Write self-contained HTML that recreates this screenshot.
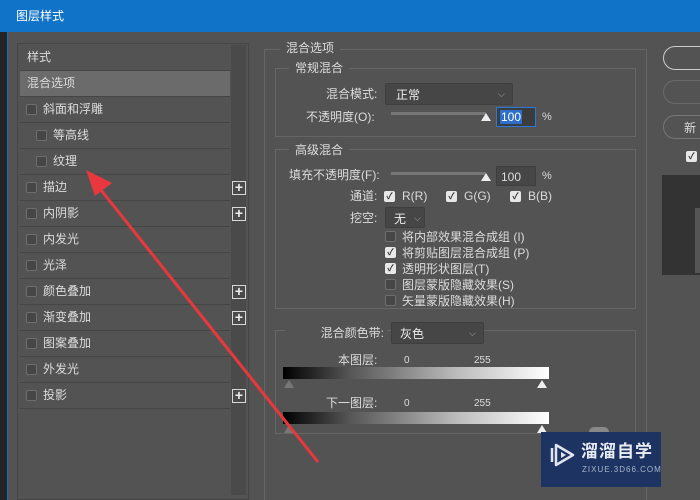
<!DOCTYPE html>
<html style="overflow:hidden"><head><meta charset="utf-8"><style>
*{margin:0;padding:0;box-sizing:border-box}
html,body{width:700px;height:500px;overflow:hidden}
body{background:#535353;font-family:"Liberation Sans","Noto Sans CJK SC",sans-serif;color:#dcdcdc;font-size:12px;position:relative;line-height:14px}
.a{position:absolute}
.row{position:absolute;left:20px;width:210px;height:26px;border-bottom:1px solid #454545;line-height:25px}
.cb{position:absolute;width:11px;height:11px;border:1px solid #6e6e6e;background:#464646;border-radius:2px}
.ck{position:absolute;width:11px;height:11px;background:#e8e8e8;border-radius:2px;color:#333;font-size:9px;line-height:11px;text-align:center;font-weight:bold}
.plus{position:absolute;left:212px;top:6px;width:14px;height:14px;border:1px solid #d8d8d8;color:#eee;font-size:14px;line-height:11px;text-align:center;font-weight:bold}
.grp{position:absolute;border:1px solid #666}
.lbl{position:absolute;background:#535353;padding:0 6px}
.sel{position:absolute;background:#464646;border:1px solid #3e3e3e;border-radius:2px;color:#eee}
.sl{position:absolute;height:3px;background:#777}
.th{position:absolute;width:0;height:0;border-left:5px solid transparent;border-right:5px solid transparent;border-bottom:8px solid #eee}
</style></head><body>
<div class="a" style="left:0;top:0;width:700px;height:32px;background:#1173c7"></div>
<div class="a" style="left:16px;top:9px;color:#fff;font-size:12px">图层样式</div>
<div class="a" style="left:0;top:32px;width:7px;height:468px;background:#242424"></div>
<div class="a" style="left:7px;top:32px;width:1px;height:468px;background:#1a6ec0"></div>
<div class="a" style="left:17px;top:43px;width:232px;height:457px;border:1px solid #464646"></div>
<div class="a" style="left:231px;top:45px;width:15px;height:450px;background:#4a4a4a"></div>

<div class="row" style="top:45px;padding-left:7px">样式</div>
<div class="row" style="top:71px;padding-left:7px;background:#6b6b6b">混合选项</div>
<div class="row" style="top:97px"><div class="cb" style="left:6px;top:7px"></div><span class="a" style="left:23px">斜面和浮雕</span></div>
<div class="row" style="top:123px"><div class="cb" style="left:16px;top:7px"></div><span class="a" style="left:33px">等高线</span></div>
<div class="row" style="top:149px"><div class="cb" style="left:16px;top:7px"></div><span class="a" style="left:33px">纹理</span></div>
<div class="row" style="top:175px"><div class="cb" style="left:6px;top:7px"></div><span class="a" style="left:23px">描边</span><div class="plus">+</div></div>
<div class="row" style="top:201px"><div class="cb" style="left:6px;top:7px"></div><span class="a" style="left:23px">内阴影</span><div class="plus">+</div></div>
<div class="row" style="top:227px"><div class="cb" style="left:6px;top:7px"></div><span class="a" style="left:23px">内发光</span></div>
<div class="row" style="top:253px"><div class="cb" style="left:6px;top:7px"></div><span class="a" style="left:23px">光泽</span></div>
<div class="row" style="top:279px"><div class="cb" style="left:6px;top:7px"></div><span class="a" style="left:23px">颜色叠加</span><div class="plus">+</div></div>
<div class="row" style="top:305px"><div class="cb" style="left:6px;top:7px"></div><span class="a" style="left:23px">渐变叠加</span><div class="plus">+</div></div>
<div class="row" style="top:331px"><div class="cb" style="left:6px;top:7px"></div><span class="a" style="left:23px">图案叠加</span></div>
<div class="row" style="top:357px"><div class="cb" style="left:6px;top:7px"></div><span class="a" style="left:23px">外发光</span></div>
<div class="row" style="top:383px"><div class="cb" style="left:6px;top:7px"></div><span class="a" style="left:23px">投影</span><div class="plus">+</div></div>

<div class="grp" style="left:264px;top:49px;width:383px;height:460px;border-bottom:none"></div>
<div class="lbl" style="left:280px;top:41px">混合选项</div>
<div class="grp" style="left:275px;top:68px;width:361px;height:69px"></div>
<div class="lbl" style="left:289px;top:61px">常规混合</div>
<div class="a" style="left:326px;top:87px">混合模式:</div>
<div class="sel" style="left:385px;top:83px;width:128px;height:22px;padding:4px 0 0 10px">正常<span class="a" style="left:112px;top:3px;font-size:9px;color:#aaa">⌵</span></div>
<div class="a" style="left:306px;top:110px">不透明度(O):</div>
<div class="sl" style="left:391px;top:112px;width:95px"></div>
<div class="th" style="left:481px;top:113px"></div>
<div class="a" style="left:496px;top:107px;width:40px;height:20px;border:1px solid #2b79d6;background:#3c3c3c"><span style="background:#2e6fcc;color:#fff;padding:0 1px;position:absolute;left:3px;top:2px;line-height:14px">100</span></div>
<div class="a" style="left:542px;top:110px;font-size:11px">%</div>

<div class="grp" style="left:275px;top:149px;width:361px;height:160px"></div>
<div class="lbl" style="left:289px;top:143px">高级混合</div>
<div class="a" style="left:289px;top:168px">填充不透明度(F):</div>
<div class="sl" style="left:391px;top:172px;width:95px"></div>
<div class="th" style="left:481px;top:173px"></div>
<div class="a" style="left:496px;top:166px;width:40px;height:20px;border:1px solid #3e3e3e;background:#464646;padding:3px 0 0 4px">100</div>
<div class="a" style="left:542px;top:169px;font-size:11px">%</div>
<div class="a" style="left:350px;top:189px">通道:</div>
<div class="ck" style="left:384px;top:191px">✓</div><div class="a" style="left:402px;top:189px">R(R)</div>
<div class="ck" style="left:446px;top:191px">✓</div><div class="a" style="left:464px;top:189px">G(G)</div>
<div class="ck" style="left:510px;top:191px">✓</div><div class="a" style="left:528px;top:189px">B(B)</div>
<div class="a" style="left:350px;top:211px">挖空:</div>
<div class="sel" style="left:385px;top:207px;width:40px;height:21px;padding:4px 0 0 8px">无<span class="a" style="left:28px;top:3px;font-size:9px;color:#aaa">⌵</span></div>
<div class="cb" style="left:385px;top:231px"></div><div class="a" style="left:402px;top:230px">将内部效果混合成组 (I)</div>
<div class="ck" style="left:385px;top:247px">✓</div><div class="a" style="left:402px;top:246px">将剪贴图层混合成组 (P)</div>
<div class="ck" style="left:385px;top:263px">✓</div><div class="a" style="left:402px;top:262px">透明形状图层(T)</div>
<div class="cb" style="left:385px;top:279px"></div><div class="a" style="left:402px;top:278px">图层蒙版隐藏效果(S)</div>
<div class="cb" style="left:385px;top:295px"></div><div class="a" style="left:402px;top:294px">矢量蒙版隐藏效果(H)</div>

<div class="grp" style="left:275px;top:330px;width:361px;height:104px"></div>
<div class="lbl" style="left:285px;top:326px;padding:0 3px 0 0;width:102px;text-align:right">混合颜色带:</div>
<div class="sel" style="left:391px;top:322px;width:93px;height:22px;padding:4px 0 0 8px">灰色<span class="a" style="left:77px;top:3px;font-size:9px;color:#aaa">⌵</span></div>
<div class="a" style="left:338px;top:353px">本图层:</div>
<div class="a" style="left:404px;top:354px;font-size:10px">0</div>
<div class="a" style="left:474px;top:354px;font-size:10px">255</div>
<div class="a" style="left:283px;top:367px;width:266px;height:12px;background:linear-gradient(90deg,#000,#555 25%,#bbb 65%,#fff)"></div>
<div class="th" style="left:284px;top:380px;border-bottom-color:#777"></div>
<div class="th" style="left:537px;top:380px"></div>
<div class="a" style="left:326px;top:396px">下一图层:</div>
<div class="a" style="left:404px;top:397px;font-size:10px">0</div>
<div class="a" style="left:474px;top:397px;font-size:10px">255</div>
<div class="a" style="left:283px;top:412px;width:266px;height:12px;background:linear-gradient(90deg,#000,#555 25%,#bbb 65%,#fff)"></div>
<div class="th" style="left:284px;top:425px;border-bottom-color:#777"></div>
<div class="th" style="left:537px;top:425px"></div>
<div class="a" style="left:589px;top:427px;width:20px;height:10px;border-radius:5px;background:#888"></div>

<div class="a" style="left:663px;top:46px;width:50px;height:24px;border:1px solid #ccc;border-radius:12px"></div>
<div class="a" style="left:663px;top:80px;width:50px;height:24px;border:1px solid #6a6a6a;border-radius:12px"></div>
<div class="a" style="left:663px;top:115px;width:50px;height:24px;border:1px solid #777;border-radius:12px;padding:5px 0 0 20px">新</div>
<div class="ck" style="left:686px;top:151px">✓</div>
<div class="a" style="left:662px;top:175px;width:38px;height:100px;background:#333"></div>
<div class="a" style="left:695px;top:208px;width:5px;height:65px;background:#555"></div>

<div class="a" style="left:541px;top:432px;width:120px;height:55px;background:#1d3362"></div>
<svg class="a" style="left:548px;top:440px" width="30" height="30" viewBox="0 0 30 30"><path d="M8 5 L25 15 L8 25 Z" fill="none" stroke="#dfe4ee" stroke-width="2.5" stroke-linejoin="round"/><path d="M4 8 V22" stroke="#dfe4ee" stroke-width="2.5"/><path d="M13 12 L18 15 L13 18Z" fill="#dfe4ee"/></svg>
<div class="a" style="left:581px;top:442px;color:#e8ecf4;font-size:17px;line-height:20px;font-weight:bold;letter-spacing:1px">溜溜自学</div>
<div class="a" style="left:582px;top:465px;color:#aab5cc;font-size:8px;line-height:10px;letter-spacing:1px">ZIXUE.3D66.COM</div>

<svg class="a" style="left:0;top:0" width="700" height="500"><line x1="318" y1="462" x2="97" y2="185" stroke="#e8383d" stroke-width="3"/><polygon points="86,170 112,183 95,196" fill="#e8383d"/></svg>
</body></html>
